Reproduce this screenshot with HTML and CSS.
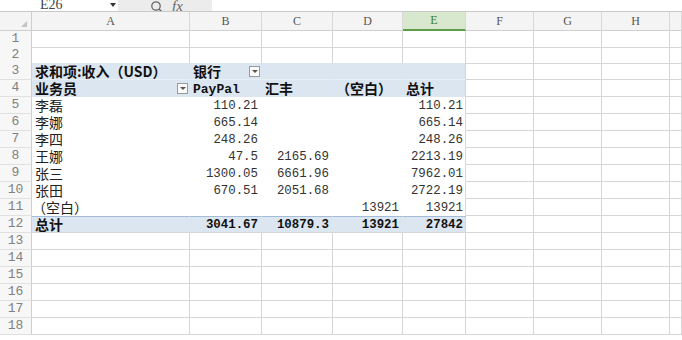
FILE: index.html
```html
<!DOCTYPE html>
<html lang="zh-CN">
<head>
    <meta charset="UTF-8">
    <title>数据透视表</title>
    <link rel="stylesheet" href="styles.css">
</head>
<body>

    <!-- 编辑栏 -->
    <div class="topbar">
        <div class="namebox"><span>E26</span></div>
        <div class="nb-arrow"></div>
        <div class="fxzone">
            <svg width="14" height="14" viewBox="0 0 14 14"><circle cx="6" cy="6" r="4.2" fill="none" stroke="#666" stroke-width="1.3"/><path d="M9 9l3.5 3.5" stroke="#666" stroke-width="1.5"/></svg>
            <span class="fx">fx</span>
        </div>
        <div class="formula"></div>
    </div>

    <!-- 列标题 -->
    <div class="row colhead">
        <div class="corner"><i></i></div>
        <div class="ch">A</div>
        <div class="ch">B</div>
        <div class="ch">C</div>
        <div class="ch">D</div>
        <div class="ch sel">E</div>
        <div class="ch">F</div>
        <div class="ch">G</div>
        <div class="ch">H</div>
        <div class="ch"></div>
    </div>

    <div class="row short">
        <div class="rh">1</div><div class="c"></div><div class="c"></div><div class="c"></div><div class="c"></div><div class="c"></div><div class="c"></div><div class="c"></div><div class="c"></div><div class="c"></div>
    </div>
    <div class="row short">
        <div class="rh">2</div><div class="c"></div><div class="c"></div><div class="c"></div><div class="c"></div><div class="c"></div><div class="c"></div><div class="c"></div><div class="c"></div><div class="c"></div>
    </div>

    <!-- 透视表 -->
    <div class="row ph top">
        <div class="rh">3</div>
        <div class="c pv txt b">求和项:收入（USD）</div>
        <div class="c pv txt b split">银行<span class="dd"></span></div>
        <div class="c pv"></div>
        <div class="c pv"></div>
        <div class="c pv pe"></div>
        <div class="c"></div><div class="c"></div><div class="c"></div><div class="c"></div>
    </div>
    <div class="row ph">
        <div class="rh">4</div>
        <div class="c pv txt b split">业务员<span class="dd"></span></div>
        <div class="c pv mono b">PayPal</div>
        <div class="c pv txt b">汇丰</div>
        <div class="c pv txt b">（空白）</div>
        <div class="c pv pe txt b">总计</div>
        <div class="c"></div><div class="c"></div><div class="c"></div><div class="c"></div>
    </div>
    <div class="row">
        <div class="rh">5</div>
        <div class="c pv txt">李磊</div>
        <div class="c pv num">110.21</div>
        <div class="c pv num"></div>
        <div class="c pv num"></div>
        <div class="c pv pe num">110.21</div>
        <div class="c"></div><div class="c"></div><div class="c"></div><div class="c"></div>
    </div>
    <div class="row">
        <div class="rh">6</div>
        <div class="c pv txt">李娜</div>
        <div class="c pv num">665.14</div>
        <div class="c pv num"></div>
        <div class="c pv num"></div>
        <div class="c pv pe num">665.14</div>
        <div class="c"></div><div class="c"></div><div class="c"></div><div class="c"></div>
    </div>
    <div class="row">
        <div class="rh">7</div>
        <div class="c pv txt">李四</div>
        <div class="c pv num">248.26</div>
        <div class="c pv num"></div>
        <div class="c pv num"></div>
        <div class="c pv pe num">248.26</div>
        <div class="c"></div><div class="c"></div><div class="c"></div><div class="c"></div>
    </div>
    <div class="row">
        <div class="rh">8</div>
        <div class="c pv txt">王娜</div>
        <div class="c pv num">47.5</div>
        <div class="c pv num">2165.69</div>
        <div class="c pv num"></div>
        <div class="c pv pe num">2213.19</div>
        <div class="c"></div><div class="c"></div><div class="c"></div><div class="c"></div>
    </div>
    <div class="row">
        <div class="rh">9</div>
        <div class="c pv txt">张三</div>
        <div class="c pv num">1300.05</div>
        <div class="c pv num">6661.96</div>
        <div class="c pv num"></div>
        <div class="c pv pe num">7962.01</div>
        <div class="c"></div><div class="c"></div><div class="c"></div><div class="c"></div>
    </div>
    <div class="row">
        <div class="rh">10</div>
        <div class="c pv txt">张田</div>
        <div class="c pv num">670.51</div>
        <div class="c pv num">2051.68</div>
        <div class="c pv num"></div>
        <div class="c pv pe num">2722.19</div>
        <div class="c"></div><div class="c"></div><div class="c"></div><div class="c"></div>
    </div>
    <div class="row">
        <div class="rh">11</div>
        <div class="c pv txt tight">（空白）</div>
        <div class="c pv num"></div>
        <div class="c pv num"></div>
        <div class="c pv num">13921</div>
        <div class="c pv pe num">13921</div>
        <div class="c"></div><div class="c"></div><div class="c"></div><div class="c"></div>
    </div>
    <div class="row pt">
        <div class="rh">12</div>
        <div class="c pv txt b">总计</div>
        <div class="c pv num b">3041.67</div>
        <div class="c pv num b">10879.3</div>
        <div class="c pv num b">13921</div>
        <div class="c pv pe num b">27842</div>
        <div class="c"></div><div class="c"></div><div class="c"></div><div class="c"></div>
    </div>

    <div class="row">
        <div class="rh">13</div><div class="c"></div><div class="c"></div><div class="c"></div><div class="c"></div><div class="c"></div><div class="c"></div><div class="c"></div><div class="c"></div><div class="c"></div>
    </div>
    <div class="row">
        <div class="rh">14</div><div class="c"></div><div class="c"></div><div class="c"></div><div class="c"></div><div class="c"></div><div class="c"></div><div class="c"></div><div class="c"></div><div class="c"></div>
    </div>
    <div class="row">
        <div class="rh">15</div><div class="c"></div><div class="c"></div><div class="c"></div><div class="c"></div><div class="c"></div><div class="c"></div><div class="c"></div><div class="c"></div><div class="c"></div>
    </div>
    <div class="row">
        <div class="rh">16</div><div class="c"></div><div class="c"></div><div class="c"></div><div class="c"></div><div class="c"></div><div class="c"></div><div class="c"></div><div class="c"></div><div class="c"></div>
    </div>
    <div class="row">
        <div class="rh">17</div><div class="c"></div><div class="c"></div><div class="c"></div><div class="c"></div><div class="c"></div><div class="c"></div><div class="c"></div><div class="c"></div><div class="c"></div>
    </div>
    <div class="row">
        <div class="rh">18</div><div class="c"></div><div class="c"></div><div class="c"></div><div class="c"></div><div class="c"></div><div class="c"></div><div class="c"></div><div class="c"></div><div class="c"></div>
    </div>

</body>
</html>
```

FILE: styles.css
```css
/* Estilo global */
* {
    box-sizing: border-box;
}

body {
    margin: 0;
    padding: 0;
    background-color: #fff;
    font-family: "Noto Sans CJK SC", sans-serif;
    color: #222;
    overflow: hidden;
}

/* Barra de fórmula (cortada no topo) */
.topbar {
    display: flex;
    align-items: flex-end;
    height: 12px;
    border-bottom: 1px solid #c9c9c9;
    overflow: hidden;
}

.namebox {
    width: 108px;
    height: 11px;
    position: relative;
    overflow: hidden;
}

.namebox span {
    position: absolute;
    left: 40px;
    bottom: -1px;
    font-family: "Liberation Serif", serif;
    font-size: 14px;
    line-height: 14px;
    color: #444;
}

.nb-arrow {
    width: 10px;
    height: 11px;
    display: flex;
    align-items: flex-start;
    justify-content: center;
}

.nb-arrow::before {
    content: "";
    margin-top: 3px;
    border-left: 3px solid transparent;
    border-right: 3px solid transparent;
    border-top: 4px solid #333;
}

.fxzone {
    width: 94px;
    height: 11px;
    background-color: #ececec;
    display: flex;
    align-items: flex-end;
    gap: 8px;
    padding-left: 32px;
    overflow: hidden;
}

.fxzone svg {
    margin-bottom: -3px;
}

.fx {
    font-family: "Liberation Serif", serif;
    font-style: italic;
    font-size: 15px;
    line-height: 15px;
    color: #666;
    margin-bottom: -3px;
}

.formula {
    flex: 1;
    height: 11px;
}

/* Grade da planilha */
.row {
    display: grid;
    grid-template-columns: 32px 158px 72px 71px 70px 63px 68px 68px 68px 1fr;
    height: 17px;
}

.row.short {
    height: 16px;
}

.colhead {
    height: 19px;
    background-color: #f4f4f4;
    border-bottom: 1px solid #cfcfcf;
}

.corner {
    border-right: 1px solid #cfcfcf;
    position: relative;
}

.corner i {
    position: absolute;
    right: 4px;
    bottom: 4px;
    border-left: 6px solid transparent;
    border-bottom: 6px solid #c4c4c4;
}

.ch {
    border-right: 1px solid #d8d8d8;
    text-align: center;
    font-family: "Liberation Serif", serif;
    font-size: 12px;
    line-height: 18px;
    color: #555;
}

.ch.sel {
    background-color: #d8e8cf;
    border-bottom: 2px solid #5e9d47;
    color: #3d7f2b;
    line-height: 17px;
}

.rh {
    background-color: #f7f7f7;
    border-right: 1px solid #cfcfcf;
    border-bottom: 1px solid #e0e0e0;
    text-align: center;
    font-family: "Liberation Mono", monospace;
    font-size: 13px;
    line-height: 16px;
    color: #808080;
}

.c {
    border-right: 1px solid #d6d6d6;
    border-bottom: 1px solid #d6d6d6;
    white-space: nowrap;
}

/* Tabela dinâmica */
.c.pv {
    border-right-color: transparent;
    border-bottom-color: transparent;
}

.c.pv.pe {
    border-right-color: #d6d6d6;
}

.ph .c.pv {
    background-color: #dce6f1;
}

.ph.top .c.pv {
    border-bottom-color: #e8eef6;
}

.pt .c.pv {
    background-color: #dce6f1;
    border-top: 1px solid #a5bcd8;
    border-bottom-color: #d6d6d6;
}

.txt {
    padding-left: 3px;
    font-size: 14px;
    line-height: 16px;
}

.tight {
    padding-left: 0;
}

.mono {
    padding-left: 3px;
    padding-top: 3px;
    font-family: "Liberation Mono", monospace;
    font-size: 13px;
    line-height: 13px;
}

.num {
    text-align: right;
    padding-right: 3px;
    padding-top: 2px;
    font-family: "Liberation Mono", monospace;
    font-size: 12.4px;
    line-height: 14px;
    color: #333;
}

.pe.num {
    padding-right: 2px;
}

.pt .num {
    padding-top: 1px;
}

.pt .txt {
    line-height: 15px;
}

.b {
    font-weight: bold;
    color: #111;
}

.split {
    display: flex;
    justify-content: space-between;
    align-items: center;
    padding-right: 1px;
}

/* Botão de filtro */
.dd {
    width: 11px;
    height: 11px;
    background-color: #fafafa;
    border: 1px solid #9a9a9a;
    display: flex;
    align-items: center;
    justify-content: center;
}

.dd::before {
    content: "";
    border-left: 3px solid transparent;
    border-right: 3px solid transparent;
    border-top: 3px solid #555;
}
```
